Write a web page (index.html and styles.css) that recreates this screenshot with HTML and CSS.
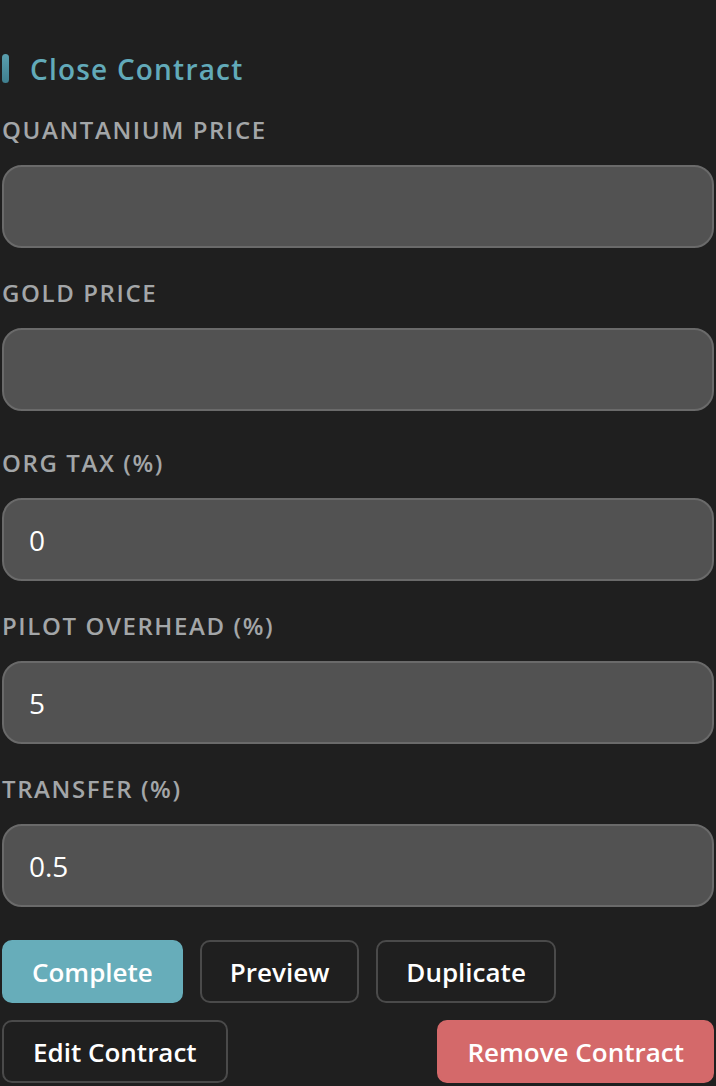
FILE: index.html
```html
<!DOCTYPE html>
<html lang="en">
<head>
    <meta charset="UTF-8">
    <meta name="viewport" content="width=device-width, initial-scale=1.0">
    <title>Close Contract</title>
    <link rel="stylesheet" href="styles.css">
</head>
<body>
    <div class="panel">
        <h2 class="panel-title">Close Contract</h2>

        <div class="price-group">
            <div class="field">
                <label for="quantanium">Quantanium Price</label>
                <input id="quantanium" type="text">
            </div>
            <div class="field">
                <label for="gold">Gold Price</label>
                <input id="gold" type="text">
            </div>
        </div>

        <div class="field">
            <label for="orgTax">Org Tax (%)</label>
            <input id="orgTax" type="text" value="0">
        </div>
        <div class="field">
            <label for="overhead">Pilot Overhead (%)</label>
            <input id="overhead" type="text" value="5">
        </div>
        <div class="field">
            <label for="transfer">Transfer (%)</label>
            <input id="transfer" type="text" value="0.5">
        </div>

        <div class="actions">
            <button class="btn btn-primary">Complete</button>
            <button class="btn">Preview</button>
            <button class="btn">Duplicate</button>
        </div>
        <div class="actions actions-split">
            <button class="btn btn-wide">Edit Contract</button>
            <button class="btn btn-danger">Remove Contract</button>
        </div>
    </div>
</body>
</html>
```

FILE: styles.css
```css
body {
  margin: 0;
  background-color: #1f1f1f;
  font-family: "Open Sans", "Noto Sans", sans-serif;
  color: #fff;
}

.panel {
  padding: 50px 2px 0;
}

.panel-title {
  margin: 0 0 26px;
  padding-left: 28px;
  position: relative;
  font-size: 28px;
  font-weight: 600;
  color: #62aab9;
  line-height: 38px;
  letter-spacing: 1.2px;
}

/* accent bar left of the title */
.panel-title::before {
  content: "";
  position: absolute;
  left: 0;
  top: 4px;
  width: 7px;
  height: 29px;
  border-radius: 4px;
  background: linear-gradient(#5a9fae, #3f7f8f);
}

.price-group {
  padding-bottom: 7px;
}

.field {
  display: flex;
  flex-direction: column;
  margin-bottom: 29px;
}

.field label {
  font-size: 24px;
  font-weight: 600;
  text-transform: uppercase;
  color: #a3a6a8;
  letter-spacing: 1.6px;
  line-height: 32px;
  margin-bottom: 19px;
}

.field input {
  height: 83px;
  box-sizing: border-box;
  border: 2px solid #6a6a6a;
  border-radius: 20px;
  background-color: #525252;
  color: #fff;
  font-family: inherit;
  font-size: 28px;
  padding: 0 25px;
  outline: none;
}

.actions {
  display: flex;
  gap: 17px;
  margin-bottom: 17px;
}

.field + .actions {
  margin-top: 33px; /* collapses with the field margin */
}

.actions-split {
  justify-content: space-between;
}

.btn {
  height: 63px;
  padding: 0 28px;
  border: 2px solid #4a4a4a;
  border-radius: 10px;
  background-color: #1f1f1f;
  color: #fff;
  font-family: inherit;
  font-size: 26px;
  font-weight: 600;
  cursor: pointer;
}

.btn-wide {
  padding: 0 29px;
}

.btn-primary {
  background-color: #67adba;
  border-color: #67adba;
}

.btn-danger {
  background-color: #d4696a;
  border-color: #d4696a;
}
```
